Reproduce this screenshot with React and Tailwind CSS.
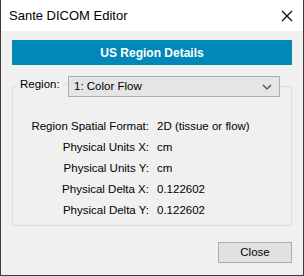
import React from "react";

const rows = [
  ["Region Spatial Format:", "2D (tissue or flow)"],
  ["Physical Units X:", "cm"],
  ["Physical Units Y:", "cm"],
  ["Physical Delta X:", "0.122602"],
  ["Physical Delta Y:", "0.122602"],
];

export default function App() {
  return (
    <div
      className="w-[304px] h-[276px] flex flex-col border-x border-b border-[#3a3a3a] bg-[#f0f0f0] text-[11.5px] text-black"
      style={{ fontFamily: '"Liberation Sans", Arial, sans-serif' }}
    >
      <div className="h-[31px] shrink-0 bg-white flex items-center justify-between pl-[8px] pr-[10px]">
        <span className="text-[13px]">Sante DICOM Editor</span>
        <svg width="12" height="12" viewBox="0 0 12 12">
          <path d="M1 1L11 11M11 1L1 11" stroke="#000" strokeWidth="1.1" />
        </svg>
      </div>
      <div className="flex-1 flex flex-col px-[11px] pt-[9px]">
        <div className="h-[25px] bg-[#0088b8] flex items-center justify-center text-white font-bold text-[12px]">
          US Region Details
        </div>
        <div className="relative mt-[21px] h-[140px] border border-[#dcdcdc]">
          <div className="absolute left-[4px] top-[-11px] flex items-center bg-[#f0f0f0]">
            <span className="px-[3px]">Region:</span>
            <span className="w-[8px] h-px bg-[#dcdcdc]"></span>
          </div>
          <div className="absolute left-[55px] top-[-11px] w-[212px] h-[21px] bg-[#e5e5e5] border border-[#adadad] flex items-center justify-between pl-[5px] pr-[7px]">
            <span>1: Color Flow</span>
            <svg width="10" height="6" viewBox="0 0 10 6">
              <path d="M1 1L5 5L9 1" stroke="#444" strokeWidth="1.2" fill="none" />
            </svg>
          </div>
          <div className="flex flex-col pt-[32px] gap-[6px]">
            {rows.map(([k, v]) => (
              <div key={k} className="flex h-[15px] items-center">
                <span className="w-[136px] text-right">{k}</span>
                <span className="ml-[8px]">{v}</span>
              </div>
            ))}
          </div>
        </div>
        <div className="flex justify-end mt-[16px]">
          <div className="w-[74px] h-[21px] bg-[#e1e1e1] border border-[#adadad] flex items-center justify-center">
            Close
          </div>
        </div>
      </div>
    </div>
  );
}
